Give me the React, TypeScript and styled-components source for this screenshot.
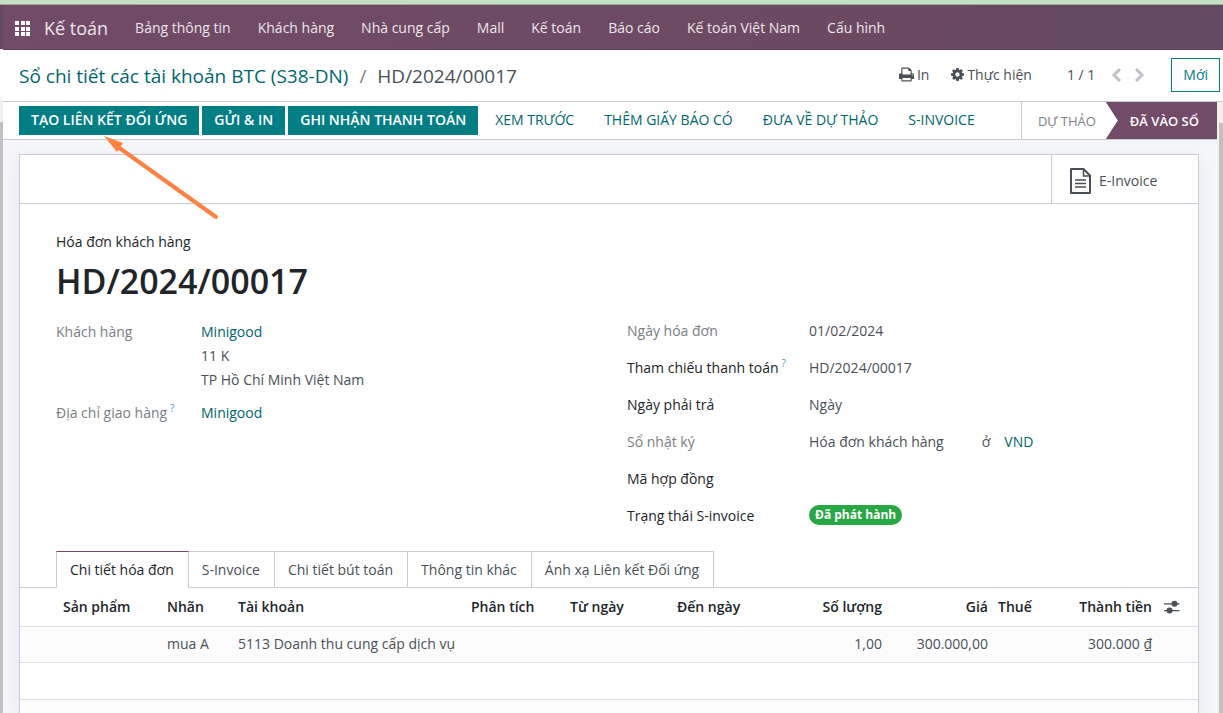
import React from 'react';
import styled, { createGlobalStyle, css } from 'styled-components';

const Global = createGlobalStyle`
  *, *::before, *::after { box-sizing: border-box; }
  html, body { margin: 0; padding: 0; }
  body {
    font-family: "Open Sans", "Noto Sans", sans-serif;
    font-size: 14px;
    line-height: 22px;
    color: #495057;
    background: #fff;
  }
  button, input { font: inherit; color: inherit; }
  a { text-decoration: none; color: inherit; }
  h1, p, dl, dd, dt, ul { margin: 0; padding: 0; }
  ul { list-style: none; }
`;

const teal = '#017e84';
const linkTeal = '#01666b';
const purple = '#714b67';
const line = '#c9ccd2';
const softLine = '#dee0e6';

const Shell = styled.div`
  position: relative;
  height: 100vh;
  display: flex;
  flex-direction: column;
  overflow: hidden;
`;

const TopStrip = styled.div`
  flex: none;
  height: 5px;
  background: #c4e0c3;
  border-bottom: 1px solid #a0ab9e;
`;

const Columns = styled.div`
  flex: 1;
  min-height: 0;
  display: flex;
`;

const Gutter = styled.div`
  flex: none;
  width: 3px;
  display: flex;
  flex-direction: column;
`;

const GutterPart = styled.div<{ $h?: number; $bg: string }>`
  flex: ${p => (p.$h ? 'none' : 1)};
  height: ${p => (p.$h ? `${p.$h}px` : 'auto')};
  background: ${p => p.$bg};
`;

const Window = styled.div`
  flex: 1;
  min-width: 0;
  display: flex;
  flex-direction: column;
`;

const Navbar = styled.nav`
  flex: none;
  height: 45px;
  display: flex;
  align-items: center;
  padding: 2px 0 0 12px;
  background: linear-gradient(100deg, #714b67 0%, #6b4a61 70%, #624a5f 100%);
  border-bottom: 1px solid #62435a;
  color: #ece6ea;
`;

const Brand = styled.a`
  margin: 0 27px 0 14px;
  font-size: 18px;
`;

const Menu = styled.ul`
  display: flex;
  gap: 27px;
  white-space: nowrap;
`;

const AppsButton = styled.button`
  border: 0;
  padding: 0;
  background: none;
  display: flex;
  color: #fff;
`;

const ControlPanel = styled.header`
  flex: none;
  height: 52px;
  display: flex;
  align-items: center;
  padding: 0 3px 2px 16px;
  border-bottom: 1px solid ${line};
`;

const Crumbs = styled.div`
  flex: 1;
  display: flex;
  gap: 11px;
  padding-top: 2px;
  font-size: 19px;
  line-height: 28px;
  white-space: nowrap;
  a { color: ${linkTeal}; }
  i { font-style: normal; color: #7c8087; }
`;

const PlainButton = styled.button`
  border: 0;
  padding: 0;
  margin-right: 22px;
  background: none;
  display: flex;
  align-items: center;
  gap: 3px;
  font-weight: 500;
`;

const Pager = styled.div`
  display: flex;
  align-items: center;
  gap: 12px;
  margin: 0 26px 0 13px;
  span { margin-right: 4px; }
`;

const PagerButton = styled.button`
  border: 0;
  padding: 0;
  background: none;
  display: flex;
  color: #c0c2c8;
`;

const NewButton = styled.button`
  height: 34px;
  padding: 0 11px;
  border: 1px solid ${teal};
  background: #fff;
  color: ${teal};
  font-weight: 500;
`;

const Body = styled.div`
  flex: 1;
  min-height: 0;
  display: flex;
`;

const Main = styled.main`
  flex: 1;
  min-width: 0;
  display: flex;
  flex-direction: column;
  background: #f5f6fa;
`;

const Scrollbar = styled.div`
  flex: none;
  width: 6px;
  padding: 21px 0 0 2px;
  background: #f1f1f1;
  div { height: 100%; background: #c1c1c1; }
`;

const StatusBar = styled.div`
  flex: none;
  height: 38px;
  display: flex;
  align-items: center;
  justify-content: space-between;
  padding-left: 16px;
  background: #fff;
  border-bottom: 1px solid ${line};
  white-space: nowrap;
`;

const Actions = styled.div`
  display: flex;
  gap: 3px;
`;

const ActionButton = styled.button<{ $primary?: boolean }>`
  height: 29px;
  border: 0;
  text-transform: uppercase;
  ${p => p.$primary
    ? css`padding: 0 12px 2px; background: ${teal}; color: #fff; font-weight: 600;`
    : css`padding: 0 13px 2px 14px; background: none; color: ${linkTeal}; font-weight: 500;`}
`;

const Steps = styled.div`
  align-self: stretch;
  display: flex;
  border-left: 1px solid ${line};
  font-size: 13px;
`;

const Step = styled.button<{ $current?: boolean }>`
  border: 0;
  text-transform: uppercase;
  ${p => p.$current
    ? css`
      padding: 0 18px 0 24px;
      background: ${purple};
      color: #fff;
      font-weight: 600;
      clip-path: polygon(0 0, 100% 0, 100% 100%, 0 100%, 12px 50%);
    `
    : css`
      padding: 0 10px 0 16px;
      background: #fff;
      color: #7c8087;
    `}
`;

const Sheet = styled.section`
  flex: 1;
  min-height: 0;
  margin: 14px 18px 0 16px;
  border: 1px solid ${line};
  border-bottom: 0;
  background: #fff;
  box-shadow: 0 6px 16px rgba(60, 60, 110, 0.08);
  overflow: hidden;
`;

const ButtonBox = styled.div`
  height: 49px;
  display: flex;
  justify-content: flex-end;
  border-bottom: 1px solid ${line};
`;

const StatButton = styled.button`
  width: 147px;
  border: 0;
  border-left: 1px solid ${line};
  background: #fff;
  padding: 3px 0 0 18px;
  display: flex;
  align-items: center;
  gap: 8px;
`;

const Content = styled.div`
  padding: 27px 36px 0;
`;

const Kind = styled.p`
  color: #212529;
  font-weight: 500;
`;

const Title = styled.h1`
  font-size: 34px;
  line-height: 56px;
  font-weight: 600;
  color: #212529;
`;

const Groups = styled.div`
  display: grid;
  grid-template-columns: 1fr 1fr;
  column-gap: 36px;
  padding-top: 11px;
`;

const Fields = styled.dl<{ $label: number; $line: number; $gap: number }>`
  display: grid;
  grid-template-columns: ${p => p.$label}px 1fr;
  align-content: start;
  row-gap: ${p => p.$gap}px;
  line-height: ${p => p.$line}px;
`;

const Label = styled.dt<{ $strong?: boolean }>`
  white-space: nowrap;
  font-weight: 500;
  color: ${p => (p.$strong ? '#212529' : '#7a7e83')};
  sup { font-size: 10px; line-height: 0; color: #3a9dbb; margin-left: 3px; }
`;

const Value = styled.dd`
  a { color: ${linkTeal}; }
`;

const JournalValue = styled(Value)`
  display: flex;
  span { margin: 0 14px 0 38px; }
`;

const Badge = styled.span`
  display: block;
  width: fit-content;
  padding: 0 6px;
  border-radius: 10px;
  line-height: 20px;
  font-size: 12px;
  font-weight: 700;
  color: #fff;
  background: #28a745;
`;

const Tabs = styled.div`
  display: flex;
  height: 37px;
  margin-top: 24px;
  padding-left: 36px;
  box-shadow: inset 0 -1px ${line};
`;

const Tab = styled.button<{ $active?: boolean }>`
  border: 1px solid ${line};
  border-left-width: ${p => (p.$active ? '1px' : '0')};
  padding: 0 14px 0 13px;
  background: #fff;
  white-space: nowrap;
  ${p => p.$active && css`
    border-top-color: ${purple};
    border-bottom-color: #fff;
    color: #212529;
  `}
`;

const Lines = styled.table`
  width: 100%;
  table-layout: fixed;
  border-collapse: collapse;
  white-space: nowrap;
  th, td {
    padding: 0 5px;
    text-align: left;
    border-bottom: 1px solid ${softLine};
  }
  th { height: 38px; font-weight: 600; color: #212529; }
  td { height: 36px; }
  th:first-child { padding-left: 43px; }
  th:last-child { padding-left: 7px; }
  tbody tr:nth-child(odd) { background: #fcfcfc; }
  tbody tr:nth-child(2) td { height: 37px; }
  th.num, td.num { text-align: right; }
`;

const IconButton = styled.button`
  border: 0;
  padding: 0;
  background: none;
  display: flex;
`;

const Pointer = styled.svg`
  position: absolute;
  left: 100px;
  top: 132px;
  pointer-events: none;
`;

const AppsIcon = () => (
  <svg width="15" height="15" viewBox="0 0 15 15" fill="currentColor">
    {[0, 5, 10].map(y => [0, 5, 10].map(x => (
      <rect key={`${x}-${y}`} x={x + (x ? 1 : 0)} y={y + (y ? 1 : 0)} width="4" height="4" />
    )))}
  </svg>
);

const PrintIcon = () => (
  <svg width="15" height="15" viewBox="0 64 1664 1664" fill="currentColor">
    <path d="M384 1536h896v-256h-896v256zm0-640h896v-384h-160q-40 0-68-28t-28-68v-160h-640v640zm1152 64q0-26-19-45t-45-19-45 19-19 45 19 45 45 19 45-19 19-45zm128 0v416q0 13-9.5 22.5t-22.5 9.5h-224v160q0 40-28 68t-68 28h-960q-40 0-68-28t-28-68v-160h-224q-13 0-22.5-9.5t-9.5-22.5v-416q0-79 56.5-135.5t135.5-56.5h64v-544q0-40 28-68t68-28h672q40 0 88 20t76 48l152 152q28 28 48 76t20 88v256h64q79 0 135.5 56.5t56.5 135.5z" />
  </svg>
);

const CogIcon = () => (
  <svg width="13" height="13" viewBox="0 128 1536 1536" fill="currentColor">
    <path d="M1024 896q0-106-75-181t-181-75-181 75-75 181 75 181 181 75 181-75 75-181zm512-109v222q0 12-8 23t-20 13l-185 28q-19 54-39 91 35 50 107 138 10 12 10 25t-9 23q-27 37-99 108t-94 71q-12 0-26-9l-138-108q-44 23-91 38-16 136-29 186-7 28-36 28h-222q-14 0-24.5-8.5t-11.5-21.5l-28-184q-49-16-90-37l-141 107q-10 9-25 9-14 0-25-11-126-114-165-168-7-10-7-23 0-12 8-23 15-21 51-66.5t54-70.5q-27-50-41-99l-183-27q-13-2-21-12.5t-8-23.5v-222q0-12 8-23t19-13l186-28q14-46 39-92-40-57-107-138-10-12-10-24 0-10 9-23 26-36 98.5-107.5t94.5-71.5q13 0 26 10l138 107q44-23 91-38 16-136 29-186 7-28 36-28h222q14 0 24.5 8.5t11.5 21.5l28 184q49 16 90 37l142-107q9-9 24-9 13 0 25 10 129 119 165 170 7 8 7 22 0 12-8 23-15 21-51 66.5t-54 70.5q26 50 41 98l183 28q13 2 21 12.5t8 23.5z" />
  </svg>
);

const Chevron = ({ d }: { d: string }) => (
  <svg width="11" height="14" viewBox="0 0 11 14" fill="none" stroke="currentColor" strokeWidth="3">
    <path d={d} />
  </svg>
);

const FileIcon = () => (
  <svg width="21" height="26" viewBox="0 0 21 26" fill="none" stroke="#495057" strokeWidth="2">
    <path d="M1 1h12.500l6.500 6.500v17.500H1z" strokeLinejoin="round" />
    <path d="M13.500 1v7H20" strokeWidth="1.600" />
    <path d="M5 12h11M5 15.500h11M5 19h11" strokeWidth="1.500" />
  </svg>
);

const SlidersIcon = () => (
  <svg width="16" height="14" viewBox="0 0 16 14" fill="#495057">
    <path d="M0 3.200h15.500v1.300H0zM0 10h15.500v1.300H0z" />
    <circle cx="10.500" cy="3.800" r="3" />
    <circle cx="5.500" cy="10.600" r="3" />
  </svg>
);

const menu = ['Bảng thông tin', 'Khách hàng', 'Nhà cung cấp', 'Mall', 'Kế toán', 'Báo cáo', 'Kế toán Việt Nam', 'Cấu hình'];
const primaryActions = ['Tạo liên kết đối ứng', 'Gửi & In', 'Ghi nhận thanh toán'];
const actions = ['Xem trước', 'Thêm giấy báo có', 'Đưa về dự thảo', 'S-Invoice'];
const tabs = ['Chi tiết hóa đơn', 'S-Invoice', 'Chi tiết bút toán', 'Thông tin khác', 'Ánh xạ Liên kết Đối ứng'];

const columns: { title: string; width?: number; num?: boolean }[] = [
  { title: 'Sản phẩm', width: 142 },
  { title: 'Nhãn', width: 71 },
  { title: 'Tài khoản' },
  { title: 'Phân tích', width: 99 },
  { title: 'Từ ngày', width: 107 },
  { title: 'Đến ngày', width: 107 },
  { title: 'Số lượng', width: 108, num: true },
  { title: 'Giá', width: 106, num: true },
  { title: 'Thuế', width: 70 },
  { title: 'Thành tiền', width: 94, num: true },
];

const rows = [
  ['', 'mua A', '5113 Doanh thu cung cấp dịch vụ', '', '', '', '1,00', '300.000,00', '', '300.000 ₫'],
  [],
  [],
];

export default function App() {
  return (
    <>
      <Global />
      <Shell>
        <TopStrip />
        <Columns>
          <Gutter>
            <GutterPart $h={44} $bg="#62495c" />
            <GutterPart $h={51} $bg="#ffffff" />
            <GutterPart $h={22} $bg="#f1f1f1" />
            <GutterPart $bg="#c1c1c1" />
          </Gutter>
          <Window>
            <Navbar>
              <AppsButton aria-label="Ứng dụng"><AppsIcon /></AppsButton>
              <Brand href="#">Kế toán</Brand>
              <Menu>
                {menu.map(m => <li key={m}><a href="#">{m}</a></li>)}
              </Menu>
            </Navbar>
            <ControlPanel>
              <Crumbs>
                <a href="#">Sổ chi tiết các tài khoản BTC (S38-DN)</a>
                <i>/</i>
                <span>HD/2024/00017</span>
              </Crumbs>
              <PlainButton><PrintIcon />In</PlainButton>
              <PlainButton><CogIcon />Thực hiện</PlainButton>
              <Pager>
                <span>1 / 1</span>
                <PagerButton aria-label="Trước"><Chevron d="M9 1L3 7l6 6" /></PagerButton>
                <PagerButton aria-label="Sau"><Chevron d="M2 1l6 6-6 6" /></PagerButton>
              </Pager>
              <NewButton>Mới</NewButton>
            </ControlPanel>
            <Body>
              <Main>
                <StatusBar>
                  <Actions>
                    {primaryActions.map(a => <ActionButton key={a} $primary>{a}</ActionButton>)}
                    {actions.map(a => <ActionButton key={a}>{a}</ActionButton>)}
                  </Actions>
                  <Steps>
                    <Step>Dự thảo</Step>
                    <Step $current>Đã vào sổ</Step>
                  </Steps>
                </StatusBar>
                <Sheet>
                  <ButtonBox>
                    <StatButton><FileIcon />E-Invoice</StatButton>
                  </ButtonBox>
                  <Content>
                    <Kind>Hóa đơn khách hàng</Kind>
                    <Title>HD/2024/00017</Title>
                    <Groups>
                      <Fields $label={145} $line={24} $gap={9}>
                        <Label>Khách hàng</Label>
                        <Value>
                          <a href="#">Minigood</a><br />
                          11 K<br />
                          TP Hồ Chí Minh Việt Nam
                        </Value>
                        <Label>Địa chỉ giao hàng<sup>?</sup></Label>
                        <Value><a href="#">Minigood</a></Value>
                      </Fields>
                      <Fields $label={182} $line={22} $gap={15}>
                        <Label>Ngày hóa đơn</Label>
                        <Value>01/02/2024</Value>
                        <Label $strong>Tham chiếu thanh toán<sup>?</sup></Label>
                        <Value>HD/2024/00017</Value>
                        <Label $strong>Ngày phải trả</Label>
                        <Value>Ngày</Value>
                        <Label>Sổ nhật ký</Label>
                        <JournalValue>Hóa đơn khách hàng<span>ở</span><a href="#">VND</a></JournalValue>
                        <Label $strong>Mã hợp đồng</Label>
                        <Value />
                        <Label $strong>Trạng thái S-invoice</Label>
                        <Value><Badge>Đã phát hành</Badge></Value>
                      </Fields>
                    </Groups>
                  </Content>
                  <Tabs role="tablist">
                    {tabs.map((t, i) => (
                      <Tab key={t} role="tab" aria-selected={i === 0} $active={i === 0}>{t}</Tab>
                    ))}
                  </Tabs>
                  <Lines>
                    <colgroup>
                      {columns.map(c => <col key={c.title} width={c.width} />)}
                      <col width={41} />
                    </colgroup>
                    <thead>
                      <tr>
                        {columns.map(c => <th key={c.title} className={c.num ? 'num' : undefined}>{c.title}</th>)}
                        <th><IconButton aria-label="Tùy chọn cột"><SlidersIcon /></IconButton></th>
                      </tr>
                    </thead>
                    <tbody>
                      {rows.map((r, i) => (
                        <tr key={i}>
                          {columns.map((c, j) => <td key={c.title} className={c.num ? 'num' : undefined}>{r[j]}</td>)}
                          <td />
                        </tr>
                      ))}
                    </tbody>
                  </Lines>
                </Sheet>
              </Main>
              <Scrollbar><div /></Scrollbar>
            </Body>
          </Window>
        </Columns>
        <Pointer width="122" height="92" viewBox="0 0 122 92">
          <path d="M18 15L116 85" stroke="#ff8243" strokeWidth="4" strokeLinecap="round" fill="none" />
          <path d="M4 4L23 11L17 20z" fill="#ff8243" />
        </Pointer>
      </Shell>
    </>
  );
}
